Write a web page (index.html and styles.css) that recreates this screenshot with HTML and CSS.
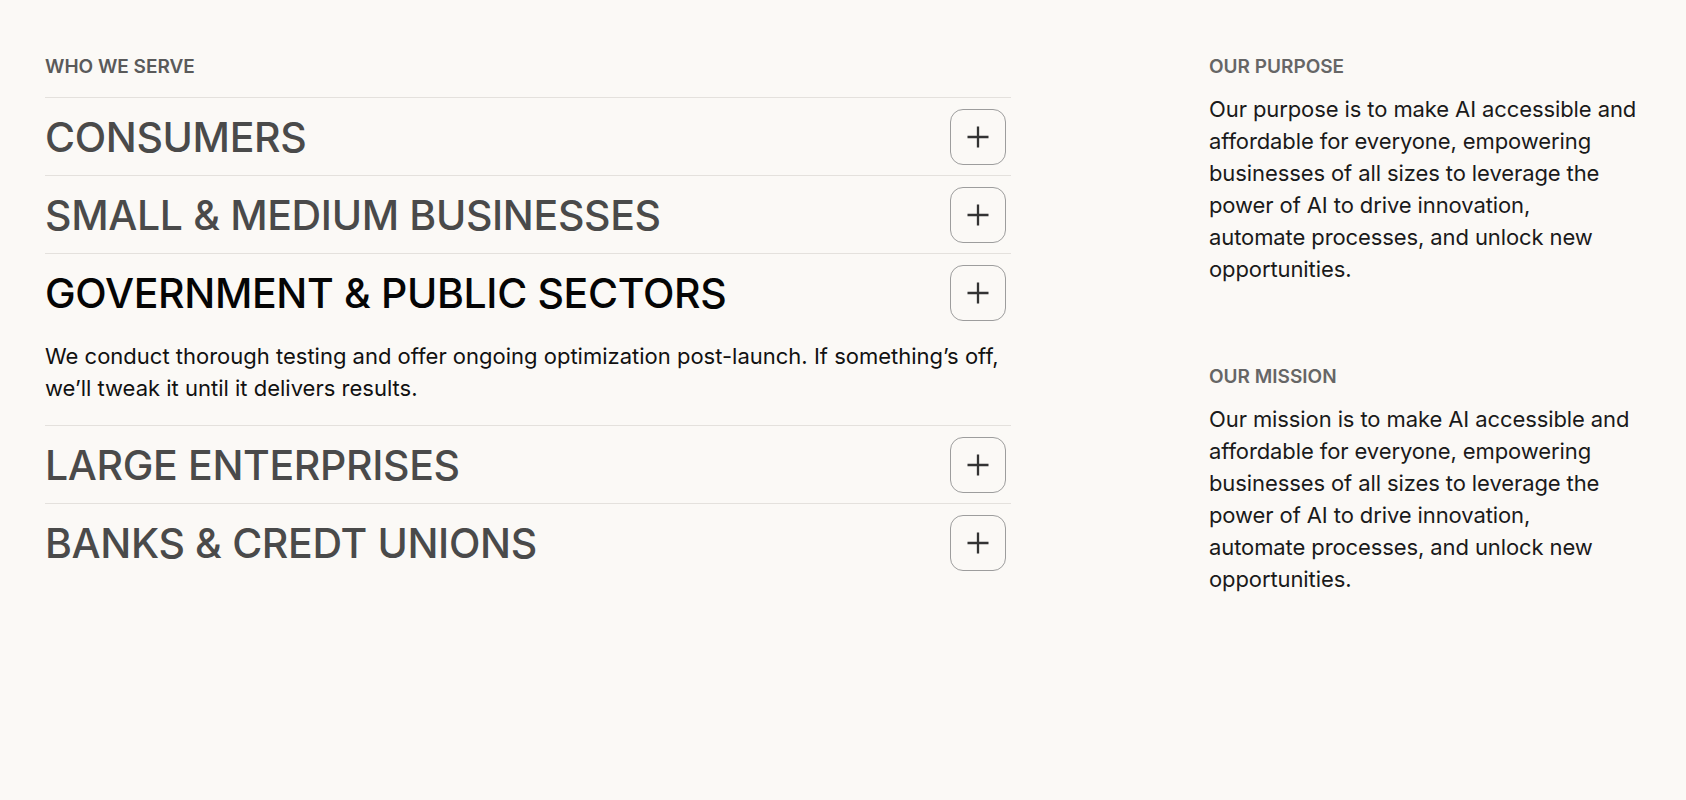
FILE: index.html
```html
<!DOCTYPE html>
<html lang="en">
<head>
<meta charset="utf-8">
<title>Who we serve</title>
<link rel="stylesheet" href="styles.css">
</head>
<body>
<main class="page">
  <section class="serve">
    <h2 class="label">WHO WE SERVE</h2>
    <div class="list">
      <div class="item">
        <div class="item-head">
          <h3 class="item-title">CONSUMERS</h3>
          <button class="toggle" aria-label="Expand"><svg viewBox="0 0 24 24" width="24" height="24"><path d="M12 1.5v21M1.5 12h21"/></svg></button>
        </div>
      </div>
      <div class="item">
        <div class="item-head">
          <h3 class="item-title">SMALL &amp; MEDIUM BUSINESSES</h3>
          <button class="toggle" aria-label="Expand"><svg viewBox="0 0 24 24" width="24" height="24"><path d="M12 1.5v21M1.5 12h21"/></svg></button>
        </div>
      </div>
      <div class="item item-open">
        <div class="item-head">
          <h3 class="item-title">GOVERNMENT &amp; PUBLIC SECTORS</h3>
          <button class="toggle" aria-label="Collapse"><svg viewBox="0 0 24 24" width="24" height="24"><path d="M12 1.5v21M1.5 12h21"/></svg></button>
        </div>
        <p class="item-body">We conduct thorough testing and offer ongoing optimization post-launch. If something’s off, we’ll tweak it until it delivers results.</p>
      </div>
      <div class="item">
        <div class="item-head">
          <h3 class="item-title">LARGE ENTERPRISES</h3>
          <button class="toggle" aria-label="Expand"><svg viewBox="0 0 24 24" width="24" height="24"><path d="M12 1.5v21M1.5 12h21"/></svg></button>
        </div>
      </div>
      <div class="item item-last">
        <div class="item-head">
          <h3 class="item-title">BANKS &amp; CREDT UNIONS</h3>
          <button class="toggle" aria-label="Expand"><svg viewBox="0 0 24 24" width="24" height="24"><path d="M12 1.5v21M1.5 12h21"/></svg></button>
        </div>
      </div>
    </div>
  </section>
  <aside class="side">
    <div class="block">
      <h2 class="label">OUR PURPOSE</h2>
      <p class="block-text">Our purpose is to make AI accessible and affordable for everyone, empowering businesses of all sizes to leverage the power of AI to drive innovation,<br> automate processes, and unlock new opportunities.</p>
    </div>
    <div class="block">
      <h2 class="label">OUR MISSION</h2>
      <p class="block-text">Our mission is to make AI accessible and affordable for everyone, empowering businesses of all sizes to leverage the power of AI to drive innovation,<br> automate processes, and unlock new opportunities.</p>
    </div>
  </aside>
</main>
</body>
</html>
```

FILE: styles.css
```css
* { box-sizing: border-box; }
html, body {
  margin: 0;
  padding: 0;
  background: #fbf9f6;
}
body {
  font-family: Inter, "Noto Sans", "Liberation Sans", sans-serif;
  color: #111;
  min-height: 800px;
}
.page {
  display: grid;
  grid-template-columns: 966px 432px;
  column-gap: 198px;
  padding: 55px 45px 0 45px;
}
.label {
  margin: 0;
  font-size: 19px;
  line-height: 24px;
  font-weight: 600;
  color: #5a5a5a;
  letter-spacing: 0;
}
.serve .label { margin-bottom: 18px; }
.list { display: flex; flex-direction: column; }
.item {
  border-top: 1px solid #e4e1dd;
}
.item-head {
  display: flex;
  align-items: center;
  justify-content: space-between;
  padding: 11px 0 10px 0;
}
.item-title {
  margin: 0;
  font-size: 41px;
  line-height: 56px;
  font-weight: 500;
  color: #4a4a4a;
  letter-spacing: -0.35px;
}
.item-open .item-title { color: #050505; }
.toggle {
  width: 56px;
  height: 56px;
  margin-right: 5px;
  border: 1.5px solid #9d9d9d;
  border-radius: 13px;
  background: transparent;
  display: flex;
  align-items: center;
  justify-content: center;
  padding: 0;
  cursor: pointer;
}
.toggle svg {
  width: 24px;
  height: 24px;
  fill: none;
  stroke: #333;
  stroke-width: 2.3;
}
.item-body {
  margin: 0;
  padding: 9px 0 21px 0;
  font-size: 22px;
  line-height: 32px;
  color: #111;
}
.side {
  display: flex;
  flex-direction: column;
  gap: 80px;
}
.side .label { margin-bottom: 14px; color: #666; }
.block-text {
  margin: 0;
  font-size: 22px;
  line-height: 32px;
  letter-spacing: -0.1px;
  color: #1a1a1a;
}
```
